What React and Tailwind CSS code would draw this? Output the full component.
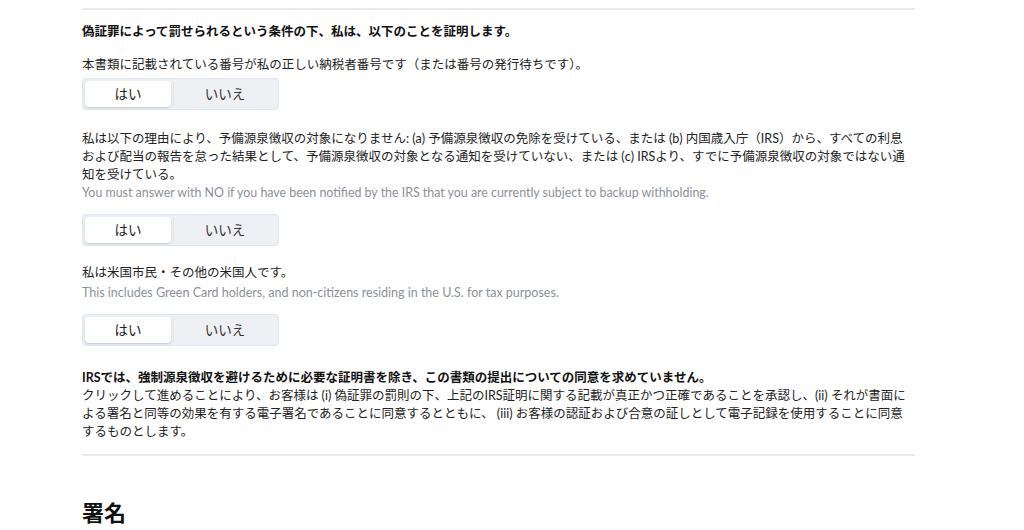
import React from "react";

const font = { fontFamily: '"Lato", "Noto Sans CJK JP", sans-serif' };

function Toggle({ className = "" }) {
  return (
    <div className={`flex w-[197px] h-[32px] rounded-[4px] border border-[#dce6f4] bg-[#eef0f3] p-[2px] ${className}`}>
      <div className="w-[86px] h-full rounded-[4px] bg-white shadow-[0_1px_2px_rgba(0,0,0,0.18)] flex items-center justify-center text-[13.5px] text-[#222]">
        はい
      </div>
      <div className="ml-[2px] w-[1px] h-full bg-[#e2e5ea]" />
      <div className="flex-1 h-full flex items-center justify-center text-[13.5px] text-[#333]">
        いいえ
      </div>
    </div>
  );
}

export default function App() {
  return (
    <div className="w-[1024px] h-[530px] bg-white overflow-hidden" style={font}>
      <div className="ml-[82px] w-[833px] text-[12.5px] leading-[18px] text-[#222]">
        <div className="mt-[8px] h-[2px] bg-[#e7e9ed]" />
        <p className="mt-[13px] font-bold text-[#111]">
          偽証罪によって罰せられるという条件の下、私は、以下のことを証明します。
        </p>
        <p className="mt-[15px]">
          本書類に記載されている番号が私の正しい納税者番号です（または番号の発行待ちです）。
        </p>
        <Toggle className="mt-[4px]" />

        <p className="mt-[20px]">
          私は以下の理由により、予備源泉徴収の対象になりません: (a) 予備源泉徴収の免除を受けている、または (b) 内国歳入庁（IRS）から、すべての利息および配当の報告を怠った結果として、予備源泉徴収の対象となる通知を受けていない、または (c) IRSより、すでに予備源泉徴収の対象ではない通知を受けている。
        </p>
        <p className="text-[12.4px] text-[#8b9099]">
          You must answer with NO if you have been notified by the IRS that you are currently subject to backup withholding.
        </p>
        <Toggle className="mt-[12px]" />

        <p className="mt-[18px]">私は米国市民・その他の米国人です。</p>
        <p className="mt-[2px] text-[12.5px] text-[#8b9099]">
          This includes Green Card holders, and non-citizens residing in the U.S. for tax purposes.
        </p>
        <Toggle className="mt-[12px]" />

        <p className="mt-[23px] font-bold text-[#111]">
          IRSでは、強制源泉徴収を避けるために必要な証明書を除き、この書類の提出についての同意を求めていません。
        </p>
        <p>
          クリックして進めることにより、お客様は (i) 偽証罪の罰則の下、上記のIRS証明に関する記載が真正かつ正確であることを承認し、(ii) それが書面による署名と同等の効果を有する電子署名であることに同意するとともに、 (iii) お客様の認証および合意の証しとして電子記録を使用することに同意するものとします。
        </p>
        <div className="mt-[13px] h-[2px] bg-[#e7e9ed]" />
        <h2 className="mt-[43px] text-[22px] leading-[28px] font-bold text-[#111]">署名</h2>
      </div>
    </div>
  );
}
